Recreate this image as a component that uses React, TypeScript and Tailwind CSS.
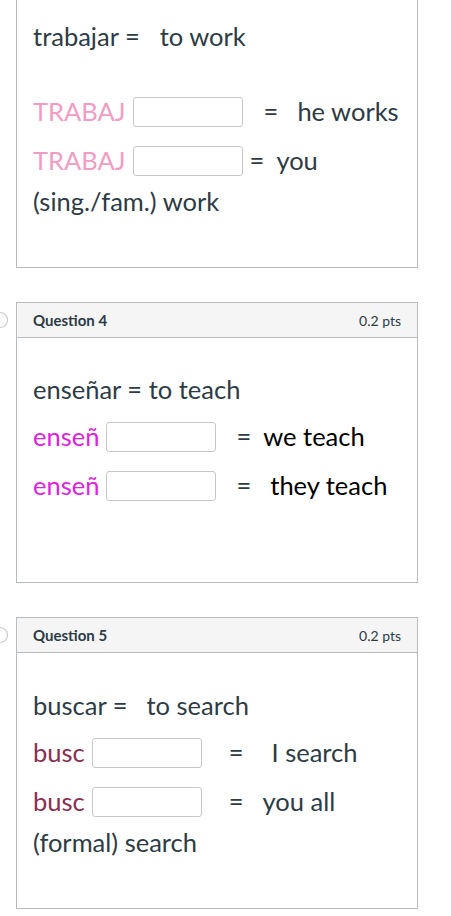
import type { ReactNode } from "react";

const FONT = "font-['Lato','Liberation_Sans',sans-serif]";

function Blank() {
  return (
    <span className="ml-[7px] inline-block h-[30px] w-[110px] shrink-0 rounded-[3px] border border-[#c4c8cc] bg-white" />
  );
}

function Row({
  stem,
  stemColor,
  eqGap,
  meaningGap,
  meaning,
  meaningColor = "text-[#2d3b45]",
}: {
  stem: string;
  stemColor: string;
  eqGap: string;
  meaningGap: string;
  meaning: string;
  meaningColor?: string;
}) {
  return (
    <div className="flex h-[49px] items-center">
      <span className={stemColor}>{stem}</span>
      <Blank />
      <span className={`${eqGap} text-[#2d3b45]`}>=</span>
      <span className={`${meaningGap} ${meaningColor}`}>{meaning}</span>
    </div>
  );
}

function Card({ title, children }: { title: string; children: ReactNode }) {
  return (
    <section className="relative mt-[34px] border border-[#b9bcbf] bg-white">
      <svg
        className="absolute left-[-26px] top-[8px] h-[18px] w-[18px]"
        viewBox="0 0 18 18"
        fill="none"
      >
        <circle cx="9" cy="9" r="7.5" stroke="#c9cccf" strokeWidth="1.2" />
      </svg>
      <header className="flex h-[35px] items-center justify-between border-b border-[#b9bcbf] bg-[#f5f5f5] px-[16px]">
        <span className="text-[15px] font-bold text-[#2d3b45]">{title}</span>
        <span className="text-[14px] text-[#2d3b45]">0.2 pts</span>
      </header>
      {children}
    </section>
  );
}

export default function App() {
  return (
    <main className={`${FONT} min-h-[916px] w-[451px] overflow-hidden bg-white text-[25.5px] text-[#2d3b45]`}>
      <div className="ml-[16px] w-[402px]">
        <section className="border border-t-0 border-[#b9bcbf] bg-white px-[16px] pb-[49px] pt-[18px]">
          <div className="flex h-[36px] items-center">
            <span>trabajar =</span>
            <span className="ml-[20px]">to work</span>
          </div>
          <div className="h-[33px]" />
          <Row stem="TRABAJ" stemColor="text-[#f39cc3]" eqGap="ml-[21px]" meaningGap="ml-[19px]" meaning="he works" />
          <Row stem="TRABAJ" stemColor="text-[#f39cc3]" eqGap="ml-[7px]" meaningGap="ml-[12px]" meaning="you" />
          <div className="flex h-[33px] items-center">(sing./fam.) work</div>
        </section>

        <Card title="Question 4">
          <div className="px-[16px] pb-[72px] pt-[33px]">
            <div className="flex h-[36px] items-center">enseñar = to teach</div>
            <div className="mt-[5px]">
              <Row stem="enseñ" stemColor="text-[#df22df]" eqGap="ml-[20px]" meaningGap="ml-[12px]" meaning="we teach" meaningColor="text-black" />
              <Row stem="enseñ" stemColor="text-[#df22df]" eqGap="ml-[20px]" meaningGap="ml-[19px]" meaning="they teach" meaningColor="text-black" />
            </div>
          </div>
        </Card>

        <Card title="Question 5">
          <div className="px-[16px] pb-[49px] pt-[34px]">
            <div className="flex h-[36px] items-center">
              <span>buscar =</span>
              <span className="ml-[19px]">to search</span>
            </div>
            <div className="mt-[5px]">
              <Row stem="busc" stemColor="text-[#8a2d52]" eqGap="ml-[27px]" meaningGap="ml-[28px]" meaning="I search" />
              <Row stem="busc" stemColor="text-[#8a2d52]" eqGap="ml-[27px]" meaningGap="ml-[19px]" meaning="you all" />
            </div>
            <div className="flex h-[33px] items-center">(formal) search</div>
          </div>
        </Card>
      </div>
    </main>
  );
}
